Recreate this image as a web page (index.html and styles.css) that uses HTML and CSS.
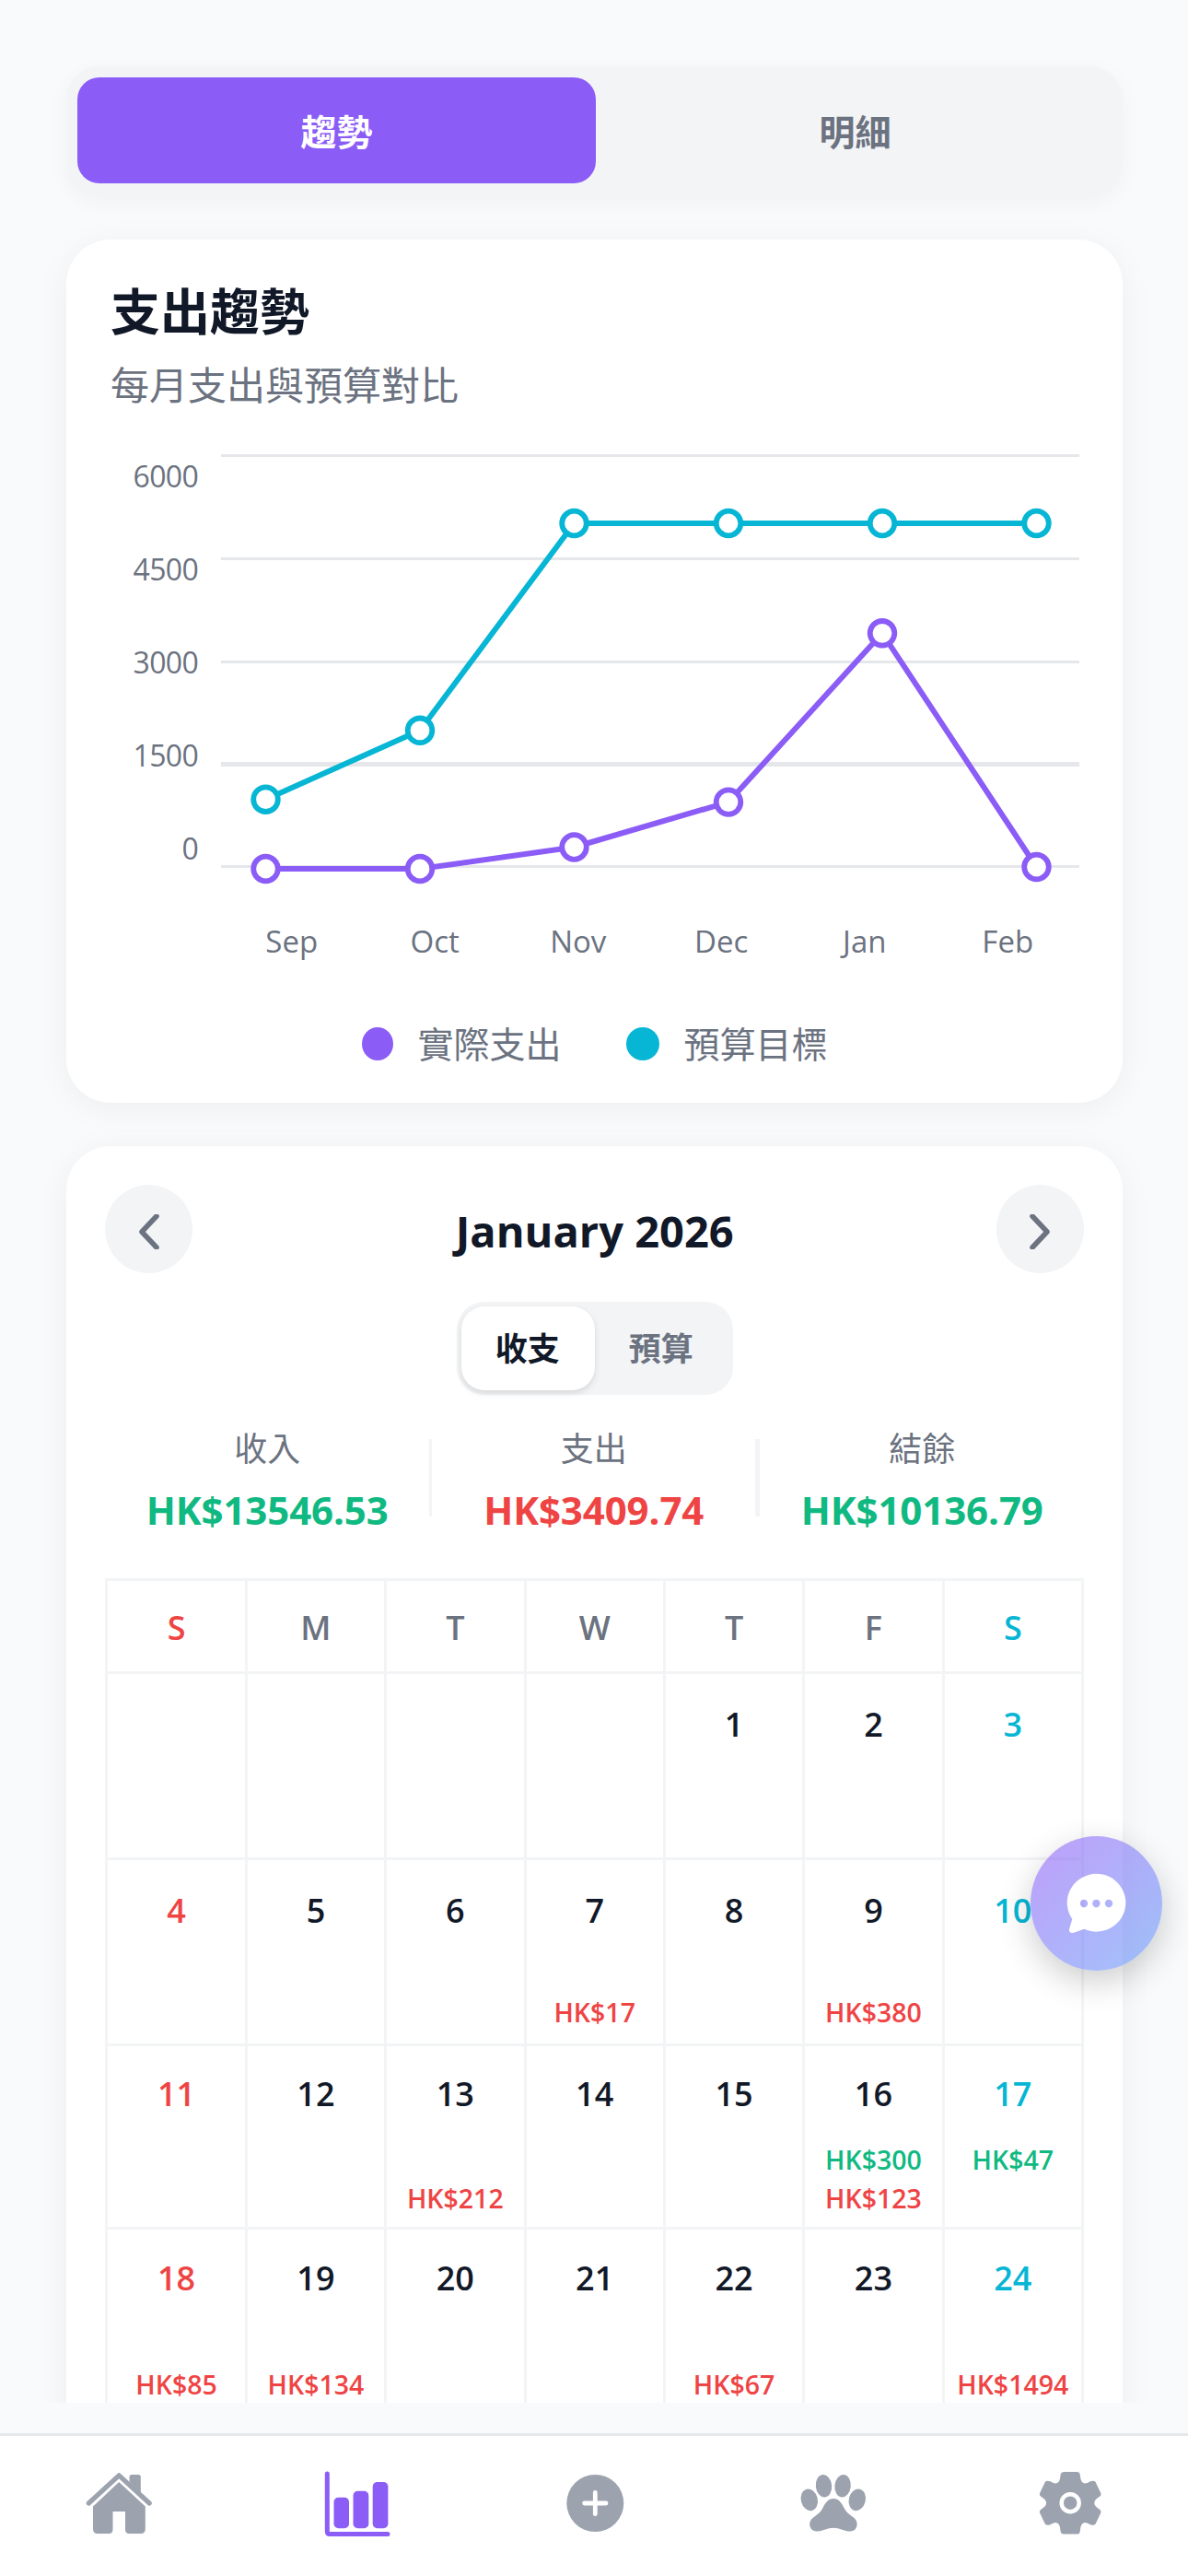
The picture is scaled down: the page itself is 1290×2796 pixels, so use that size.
FILE: index.html
```html
<!DOCTYPE html>
<html lang="zh-Hant">
<head>
  <meta charset="UTF-8">
  <title>支出趨勢</title>
  <link rel="stylesheet" href="styles.css">
</head>
<body>
<div class="app">
  <main class="content">
    <div class="tabs">
      <div class="tab active">趨勢</div>
      <div class="tab">明細</div>
    </div>

    <section class="card trend">
      <h1>支出趨勢</h1>
      <p class="subtitle">每月支出與預算對比</p>

      <div class="chart">
        <div class="y-axis"><span>6000</span><span>4500</span><span>3000</span><span>1500</span><span>0</span></div>
        <svg class="plot" viewBox="0 0 932 506">
          <g stroke="#e5e7eb" stroke-width="3">
            <path d="M0 28.5H932M0 140.5H932M0 252.5H932M0 474.5H932"/>
            <path d="M0 363.5H932" stroke-width="5"/>
          </g>
          <g fill="none" stroke-width="6" stroke-linejoin="round">
            <polyline stroke="#06b6d4" points="48.5,401.7 216,326.8 383.5,102 551,102 718,102 885.5,102"/>
            <polyline stroke="#8b5cf6" points="48.5,477 216,477 383.5,453.5 551,404.6 718,221.3 885.5,475"/>
          </g>
          <g fill="#fff" stroke-width="5.8" stroke="#06b6d4">
            <circle cx="48.5" cy="401.7" r="13.3"/>
            <circle cx="216" cy="326.8" r="13.3"/>
            <circle cx="383.5" cy="102" r="13.3"/>
            <circle cx="551" cy="102" r="13.3"/>
            <circle cx="718" cy="102" r="13.3"/>
            <circle cx="885.5" cy="102" r="13.3"/>
          </g>
          <g fill="#fff" stroke-width="5.8" stroke="#8b5cf6">
            <circle cx="48.5" cy="477" r="13.3"/>
            <circle cx="216" cy="477" r="13.3"/>
            <circle cx="383.5" cy="453.5" r="13.3"/>
            <circle cx="551" cy="404.6" r="13.3"/>
            <circle cx="718" cy="221.3" r="13.3"/>
            <circle cx="885.5" cy="475" r="13.3"/>
          </g>
        </svg>
      </div>
      <div class="x-axis"><span>Sep</span><span>Oct</span><span>Nov</span><span>Dec</span><span>Jan</span><span>Feb</span></div>

      <div class="legend">
        <div class="legend-item"><i class="dot actual"></i>實際支出</div>
        <div class="legend-item"><i class="dot budget"></i>預算目標</div>
      </div>
    </section>

    <section class="card month">
      <div class="month-head">
        <div class="round"><svg width="24" height="38" viewBox="0 0 24 38"><path d="M20 2L4 19L20 36"/></svg></div>
        <h2>January 2026</h2>
        <div class="round"><svg width="24" height="38" viewBox="0 0 24 38"><path d="M4 2L20 19L4 36"/></svg></div>
      </div>

      <div class="switch">
        <div class="option on">收支</div>
        <div class="option">預算</div>
      </div>

      <div class="stats">
        <div class="stat"><span>收入</span><b class="income">HK$13546.53</b></div>
        <div class="line"></div>
        <div class="stat"><span>支出</span><b class="expense">HK$3409.74</b></div>
        <div class="line wide"></div>
        <div class="stat"><span>結餘</span><b class="income">HK$10136.79</b></div>
      </div>

      <div class="calendar">
        <div class="wd sun">S</div><div class="wd">M</div><div class="wd">T</div><div class="wd">W</div><div class="wd">T</div><div class="wd">F</div><div class="wd sat">S</div>

        <div class="day"></div>
        <div class="day"></div>
        <div class="day"></div>
        <div class="day"></div>
        <div class="day">1</div>
        <div class="day">2</div>
        <div class="day sat">3</div>

        <div class="day sun">4</div>
        <div class="day">5</div>
        <div class="day">6</div>
        <div class="day">7<em class="expense">HK$17</em></div>
        <div class="day">8</div>
        <div class="day">9<em class="expense">HK$380</em></div>
        <div class="day sat">10</div>

        <div class="day sun">11</div>
        <div class="day">12</div>
        <div class="day">13<em class="expense">HK$212</em></div>
        <div class="day">14</div>
        <div class="day">15</div>
        <div class="day">16<em class="income">HK$300</em><em class="expense">HK$123</em></div>
        <div class="day sat">17<em class="income">HK$47</em><em></em></div>

        <div class="day sun">18<em class="expense">HK$85</em></div>
        <div class="day">19<em class="expense">HK$134</em></div>
        <div class="day">20</div>
        <div class="day">21</div>
        <div class="day">22<em class="expense">HK$67</em></div>
        <div class="day">23</div>
        <div class="day sat">24<em class="expense">HK$1494</em></div>
      </div>
    </section>
  </main>

  <nav class="nav">
    <svg viewBox="0 0 72 72">
      <path d="M3.3 36L36.2 5.8L69.2 36" fill="none" stroke="currentColor" stroke-width="5.2" stroke-linecap="round" stroke-linejoin="round"/>
      <path d="M47.5 13V7.5q0-2.5 2.5-2.5h7.3q2.5 0 2.5 2.5V25z"/>
      <path d="M36.2 13L64.8 39.5V64q0 5-5 5H47.5q-4.5 0-4.5-4.5V45H29.5V64.5q0 4.5-4.5 4.5H13q-5 0-5-5V39.5z"/>
    </svg>
    <svg class="current" viewBox="0 0 72 72">
      <path d="M3.3 4V66.5q0 3 3 3H69" fill="none" stroke="currentColor" stroke-width="5" stroke-linecap="round"/>
      <rect x="10.5" y="29.7" width="16.5" height="33.5" rx="5"/>
      <rect x="31.5" y="22.8" width="16.8" height="40.4" rx="5"/>
      <rect x="52.7" y="13" width="16.7" height="50.2" rx="5"/>
    </svg>
    <svg viewBox="0 0 72 72">
      <circle cx="36.3" cy="36" r="31"/>
      <path d="M36.3 24.3V47.7M24.6 36H48" stroke="#fff" stroke-width="4.8" stroke-linecap="round"/>
    </svg>
    <svg viewBox="0 0 72 72">
      <ellipse cx="10.8" cy="32.3" rx="9" ry="12" transform="rotate(-14 10.8 32.3)"/>
      <ellipse cx="26.5" cy="17.3" rx="8.7" ry="12.3" transform="rotate(-6 26.5 17.3)"/>
      <ellipse cx="47.1" cy="17.3" rx="8.7" ry="12.3" transform="rotate(6 47.1 17.3)"/>
      <ellipse cx="62.8" cy="32.3" rx="9" ry="12" transform="rotate(14 62.8 32.3)"/>
      <path d="M37 31C31 31 28 36 25.5 41C23.5 45.5 20 48 16.5 50.5C13 53 11.2 55 11.2 58.5C11.2 64 15 66.8 20 66.4C26 66 31 62.7 37 62.7C43 62.7 48 66 54 66.4C59 66.8 62.6 64 62.6 58.5C62.6 55 61 53 57.5 50.5C54 48 50.5 45.5 48.5 41C46 36 43 31 37 31z"/>
    </svg>
    <svg viewBox="0 0 72 72">
      <path d="M28 2H43Q45.3 2 45.7 4.5L46.4 9.5Q47.5 14 51 14.5Q53 14.6 57 12.3Q61 10.8 62.6 13L68.3 25Q69.3 27.5 66 29.5Q61.3 32.5 61.3 35.7Q61.3 39 66 42Q69.3 44 68.3 46.5L62.6 58.5Q61 60.6 57 59.2Q53 57 51 57Q47.5 57.4 46.4 62L45.7 67Q45.3 69.5 43 69.5H28Q25.2 69.5 24.7 67L24 62Q22.9 57.4 19.4 57Q17.4 57 13.4 59.2Q9.4 60.6 7.8 58.5L2.1 46.5Q1.1 44 4.4 42Q9.1 39 9.1 35.7Q9.1 32.5 4.4 29.5Q1.1 27.5 2.1 25L7.8 13Q9.4 10.8 13.4 12.3Q17.4 14.6 19.4 14.5Q22.9 14 24 9.5L24.7 4.5Q25.2 2 28 2Z"/>
      <circle cx="35.2" cy="35.7" r="9.5" fill="none" stroke="#fff" stroke-width="4.5"/>
    </svg>
  </nav>

  <div class="chat">
    <svg width="66" height="66" viewBox="0 0 66 66"><path fill="#fff" fill-rule="evenodd" d="M6.3 50A31.8 31.4 0 1 1 19.3 60.8L8 64.8Q2.5 65.5 3 61ZM19 28.8a4.2 4.2 0 1 0 .01 0zM32.4 28.8a4.2 4.2 0 1 0 .01 0zM46 28.8a4.2 4.2 0 1 0 .01 0z"/></svg>
  </div>
</div>
</body>
</html>
```
FILE: styles.css
```css
* { box-sizing: border-box; margin: 0; padding: 0; }
html { overflow: hidden; }
body {
  width: 1290px;
  height: 2796px;
  overflow: hidden;
  background: #f9fafb;
  color: #111827;
  font-family: "Open Sans", "Noto Sans CJK TC", sans-serif;
}
.app { position: relative; width: 1292px; height: 2796px; display: flex; flex-direction: column; }
.content { height: 2608px; flex: none; padding: 72px 73px 0 72.4px; overflow: hidden; }

/* tabs */
.tabs { display: flex; height: 141px; padding: 11.5px 9px 14.5px 11.6px; border-radius: 36px; background: #f3f4f6; box-shadow: 0 6px 24px rgba(0, 0, 0, .04); }
.tab { flex: 1; display: flex; align-items: center; justify-content: center; border-radius: 24px; color: #6b7280; font-size: 39px; font-weight: 600; }
.tab.active { background: #8b5cf6; color: #fff; }

.card { background: #fff; border-radius: 48px; box-shadow: 0 6px 36px rgba(0, 0, 0, .05); }

/* trend chart */
.trend { height: 937px; margin-top: 47px; padding: 48px 47px 0 47.6px; }
h1 { font-size: 54px; line-height: 60px; font-weight: 700; }
.subtitle { margin-top: 20px; font-size: 42px; line-height: 60px; color: #6b7280; }
.chart { display: flex; gap: 25px; margin-top: 18px; }
.y-axis { width: 95px; display: flex; flex-direction: column; text-align: right; color: #6b7280; font-size: 32px; letter-spacing: -.7px; line-height: 101px; }
.plot { width: 932px; height: 506px; display: block; }
.x-axis { display: flex; margin: 28px 0 0 119px; color: #6b7280; font-size: 33px; line-height: 44px; }
.x-axis span { flex: 1; text-align: center; }
.legend { display: flex; justify-content: center; gap: 71px; margin-top: 61px; color: #6b7280; font-size: 39px; line-height: 56px; }
.legend-item { display: flex; align-items: center; gap: 26px; }
.dot { width: 36px; height: 36px; border-radius: 50%; }
.actual { width: 34px; background: #8b5cf6; }
.budget { background: #06b6d4; }

/* month card */
.month { height: 1500px; margin-top: 47px; padding: 42px 42px 0; }
.month-head { display: flex; align-items: center; justify-content: space-between; height: 96px; }
.round { width: 95px; height: 96px; display: flex; align-items: center; justify-content: center; padding-top: 5px; border-radius: 50%; background: #f3f4f6; }
.round path { fill: none; stroke: #6b7280; stroke-width: 5.5; stroke-linecap: round; stroke-linejoin: round; }
h2 { padding-top: 4px; font-size: 47px; font-weight: 700; line-height: 92px; }
.switch { display: flex; width: 300px; height: 101px; margin: 31px auto 0; padding: 5px; border-radius: 30px; background: #f3f4f6; }
.option { flex: 1; display: flex; align-items: center; justify-content: center; padding: 0 1px 5px 0; border-radius: 25px; color: #6b7280; font-size: 35px; font-weight: 600; }
.option.on { background: #fff; color: #111827; box-shadow: 0 3px 7px rgba(0, 0, 0, .12); }
.stats { display: flex; align-items: flex-start; height: 199px; padding-top: 32px; }
.stat { flex: 1; display: flex; flex-direction: column; text-align: center; }
.stat span { color: #6b7280; font-size: 36px; line-height: 54px; }
.stat b { font-size: 42px; line-height: 54px; margin-top: 12px; letter-spacing: -.1px; }
.line { width: 3px; height: 84px; margin-top: 16px; background: #f3f4f6; }
.line.wide { width: 5px; }
.income { color: #10b981; }
.expense { color: #ef4444; }

/* calendar */
.calendar { display: grid; grid-template-columns: repeat(7, 1fr); grid-template-rows: 101px 202px 202px 199px 202px; border: 3px solid #f3f4f6; border-width: 3px 0 0 3px; }
.wd, .day { border: 3px solid #f3f4f6; border-width: 0 3px 3px 0; font-size: 36px; font-weight: 600; text-align: center; }
.wd { padding-top: 2px; line-height: 96px; color: #6b7280; }
.wd { line-height: 98px; }
.day { display: flex; flex-direction: column; padding-top: 30px; padding-bottom: 13px; line-height: 50px; }
.day:nth-child(n+22) { padding-top: 27px; padding-bottom: 10px; }
.day:nth-child(n+29) { padding-top: 28px; }
.day em { font-size: 28.5px; font-style: normal; line-height: 42px; height: 42px; }
.day em:first-of-type { margin-top: auto; }
.calendar .sun { color: #ef4444; }
.calendar .sat { color: #06b6d4; }

/* bottom bar */
.nav { display: flex; align-items: center; justify-content: space-around; height: 155px; margin-top: 33px; padding-bottom: 7px; border-top: 3px solid #e5e7eb; background: #fff; color: #9ca3af; }
.nav svg { width: 72px; height: 72px; fill: currentColor; overflow: visible; }
.nav .current { color: #8b5cf6; }

/* floating chat button, sits over the calendar */
.chat { position: absolute; left: 1119px; top: 1993px; width: 143px; height: 146px; display: flex; align-items: center; justify-content: center; border-radius: 50%; background: linear-gradient(135deg, rgba(144, 88, 246, .58), rgba(59, 130, 246, .48)); box-shadow: 0 12px 36px rgba(0, 0, 0, .2); }
```
